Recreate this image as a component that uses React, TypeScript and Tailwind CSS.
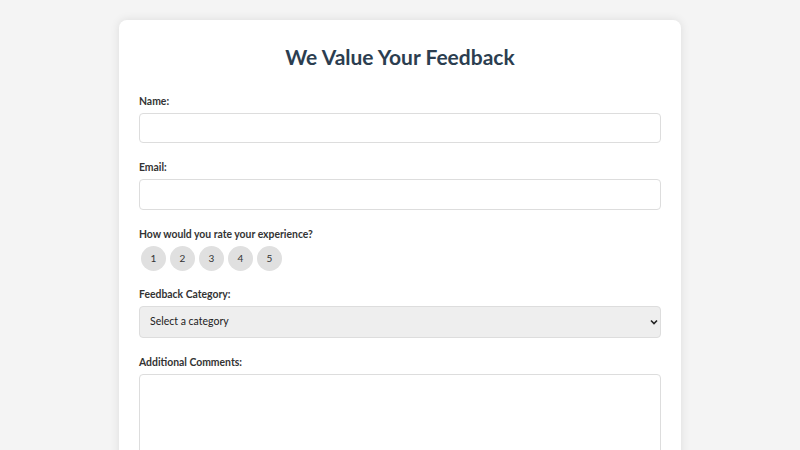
import React, { useState } from 'react';

const font = { fontFamily: 'Lato, "Open Sans", sans-serif' };

const App: React.FC = () => {
  const [rating, setRating] = useState<number | null>(null);

  return (
    <div className="min-h-screen bg-[#f4f4f4] px-[119px] pt-5" style={font}>
      <div className="bg-white rounded-lg shadow-[0_0_10px_rgba(0,0,0,0.1)] px-5 pt-5 pb-5">
        <h2 className="text-center text-[21px] font-bold text-[#2c3e50] mt-[1px] mb-[19px] leading-[32px]">
          We Value Your Feedback
        </h2>

        <div className="mb-[15px]">
          <label className="block text-[10.4px] font-bold text-[#333] mb-[3px] leading-[18px]">Name:</label>
          <input className="w-full h-[30px] border border-[#ddd] rounded px-2 text-[11px]" />
        </div>

        <div className="mb-[15px]">
          <label className="block text-[10.4px] font-bold text-[#333] mb-[3px] leading-[18px]">Email:</label>
          <input className="w-full h-[31px] border border-[#ddd] rounded px-2 text-[11px]" />
        </div>

        <div className="mb-[14px]">
          <label className="block text-[10.4px] font-bold text-[#333] mb-[3px] leading-[18px]">
            How would you rate your experience?
          </label>
          <div className="flex gap-1 pl-[2px]">
            {[1, 2, 3, 4, 5].map((n) => (
              <button
                key={n}
                onClick={() => setRating(n)}
                className={`w-[25px] h-[25px] rounded-full text-[10px] text-[#333] flex items-center justify-center ${
                  rating === n ? 'bg-[#3498db] text-white' : 'bg-[#e0e0e0]'
                }`}
              >
                {n}
              </button>
            ))}
          </div>
        </div>

        <div className="mb-[15px]">
          <label className="block text-[10.4px] font-bold text-[#333] mb-[3px] leading-[18px]">Feedback Category:</label>
          <div className="relative">
            <select className="w-full h-[32px] appearance-none border border-[#ddd] rounded pl-[10px] pr-6 text-[10.5px] text-[#222] bg-[#eeeeee]">
              <option>Select a category</option>
              <option>Product</option>
              <option>Service</option>
              <option>Other</option>
            </select>
            <svg
              className="absolute right-[3px] top-[12px] w-[8px] h-[8px] pointer-events-none"
              viewBox="0 0 8 8"
            >
              <path d="M1 2.5 L4 5.5 L7 2.5" fill="none" stroke="#222" strokeWidth="1.6" />
            </svg>
          </div>
        </div>

        <div className="mb-[14px]">
          <label className="block text-[10.4px] font-bold text-[#333] mb-[3px] leading-[18px]">Additional Comments:</label>
          <textarea className="w-full h-[120px] border border-[#ddd] rounded px-2 text-[11px] resize-none" />
        </div>
      </div>
    </div>
  );
};

export default App;
